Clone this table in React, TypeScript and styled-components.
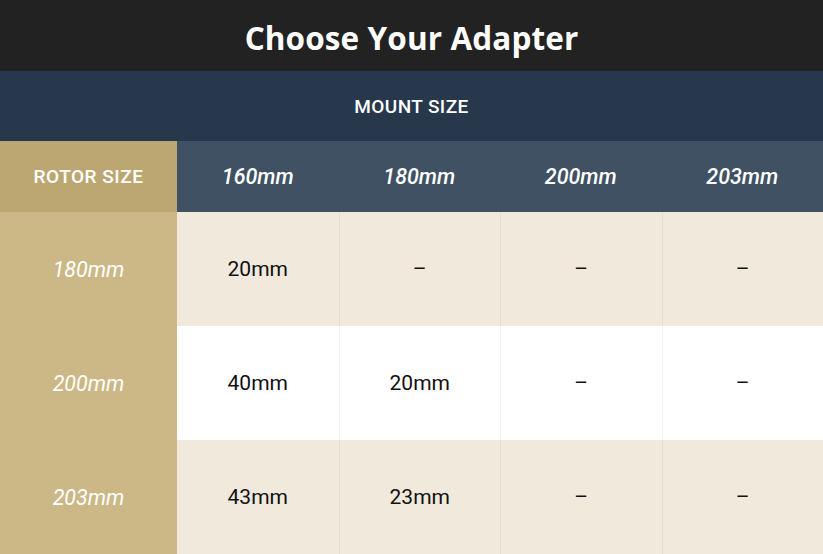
import React from "react";
import styled, { createGlobalStyle } from "styled-components";

const Global = createGlobalStyle`
  html, body { margin: 0; padding: 0; background: #ffffff; }
  body { font-family: Roboto, "Liberation Sans", sans-serif; }
`;

const Page = styled.div`
  width: 823px;
  height: 554px;
  display: flex;
  flex-direction: column;
  overflow: hidden;
`;

const TitleBar = styled.div`
  height: 71px;
  background: #222222;
  display: flex;
  align-items: center;
  justify-content: center;
`;

const Title = styled.h1`
  margin: 3px 0 0;
  color: #ffffff;
  font-family: "Open Sans", "Noto Sans", sans-serif;
  font-weight: 700;
  font-size: 31.5px;
  letter-spacing: 0.1px;
`;

const MountBar = styled.div`
  height: 70px;
  background: #27384d;
  color: #ffffff;
  display: flex;
  align-items: center;
  justify-content: center;
  font-weight: 500;
  font-size: 19px;
  letter-spacing: 0.4px;
`;

const Grid = styled.div`
  flex: 1;
  display: grid;
  grid-template-columns: 177px repeat(4, 1fr);
  grid-template-rows: 71px repeat(3, 1fr);
`;

const Cell = styled.div<{ $bg: string; $divider?: boolean }>`
  background: ${(p) => p.$bg};
  display: flex;
  align-items: center;
  justify-content: center;
  border-left: ${(p) => (p.$divider ? "1px solid rgba(0, 0, 0, 0.045)" : "none")};
`;

const CornerText = styled.span`
  color: #ffffff;
  font-weight: 500;
  font-size: 19px;
  letter-spacing: 0.5px;
`;

const HeadText = styled.span`
  color: #ffffff;
  font-style: italic;
  font-weight: 500;
  font-size: 21.5px;
`;

const RowLabel = styled.span`
  color: #ffffff;
  font-style: italic;
  font-size: 21.5px;
`;

const Value = styled.span`
  color: #111111;
  font-size: 21px;
`;

const mounts = ["160mm", "180mm", "200mm", "203mm"];
const rows = [
  { rotor: "180mm", values: ["20mm", "–", "–", "–"] },
  { rotor: "200mm", values: ["40mm", "20mm", "–", "–"] },
  { rotor: "203mm", values: ["43mm", "23mm", "–", "–"] },
];

export default function App() {
  return (
    <Page>
      <Global />
      <TitleBar>
        <Title>Choose Your Adapter</Title>
      </TitleBar>
      <MountBar>MOUNT SIZE</MountBar>
      <Grid>
        <Cell $bg="#bca772">
          <CornerText>ROTOR SIZE</CornerText>
        </Cell>
        {mounts.map((m) => (
          <Cell key={m} $bg="#3f5163">
            <HeadText>{m}</HeadText>
          </Cell>
        ))}
        {rows.map((r, i) => {
          const bg = i % 2 === 0 ? "#f0e9dc" : "#ffffff";
          return (
            <React.Fragment key={r.rotor}>
              <Cell $bg="#cbb886">
                <RowLabel>{r.rotor}</RowLabel>
              </Cell>
              {r.values.map((v, j) => (
                <Cell key={j} $bg={bg} $divider={j > 0}>
                  <Value>{v}</Value>
                </Cell>
              ))}
            </React.Fragment>
          );
        })}
      </Grid>
    </Page>
  );
}
